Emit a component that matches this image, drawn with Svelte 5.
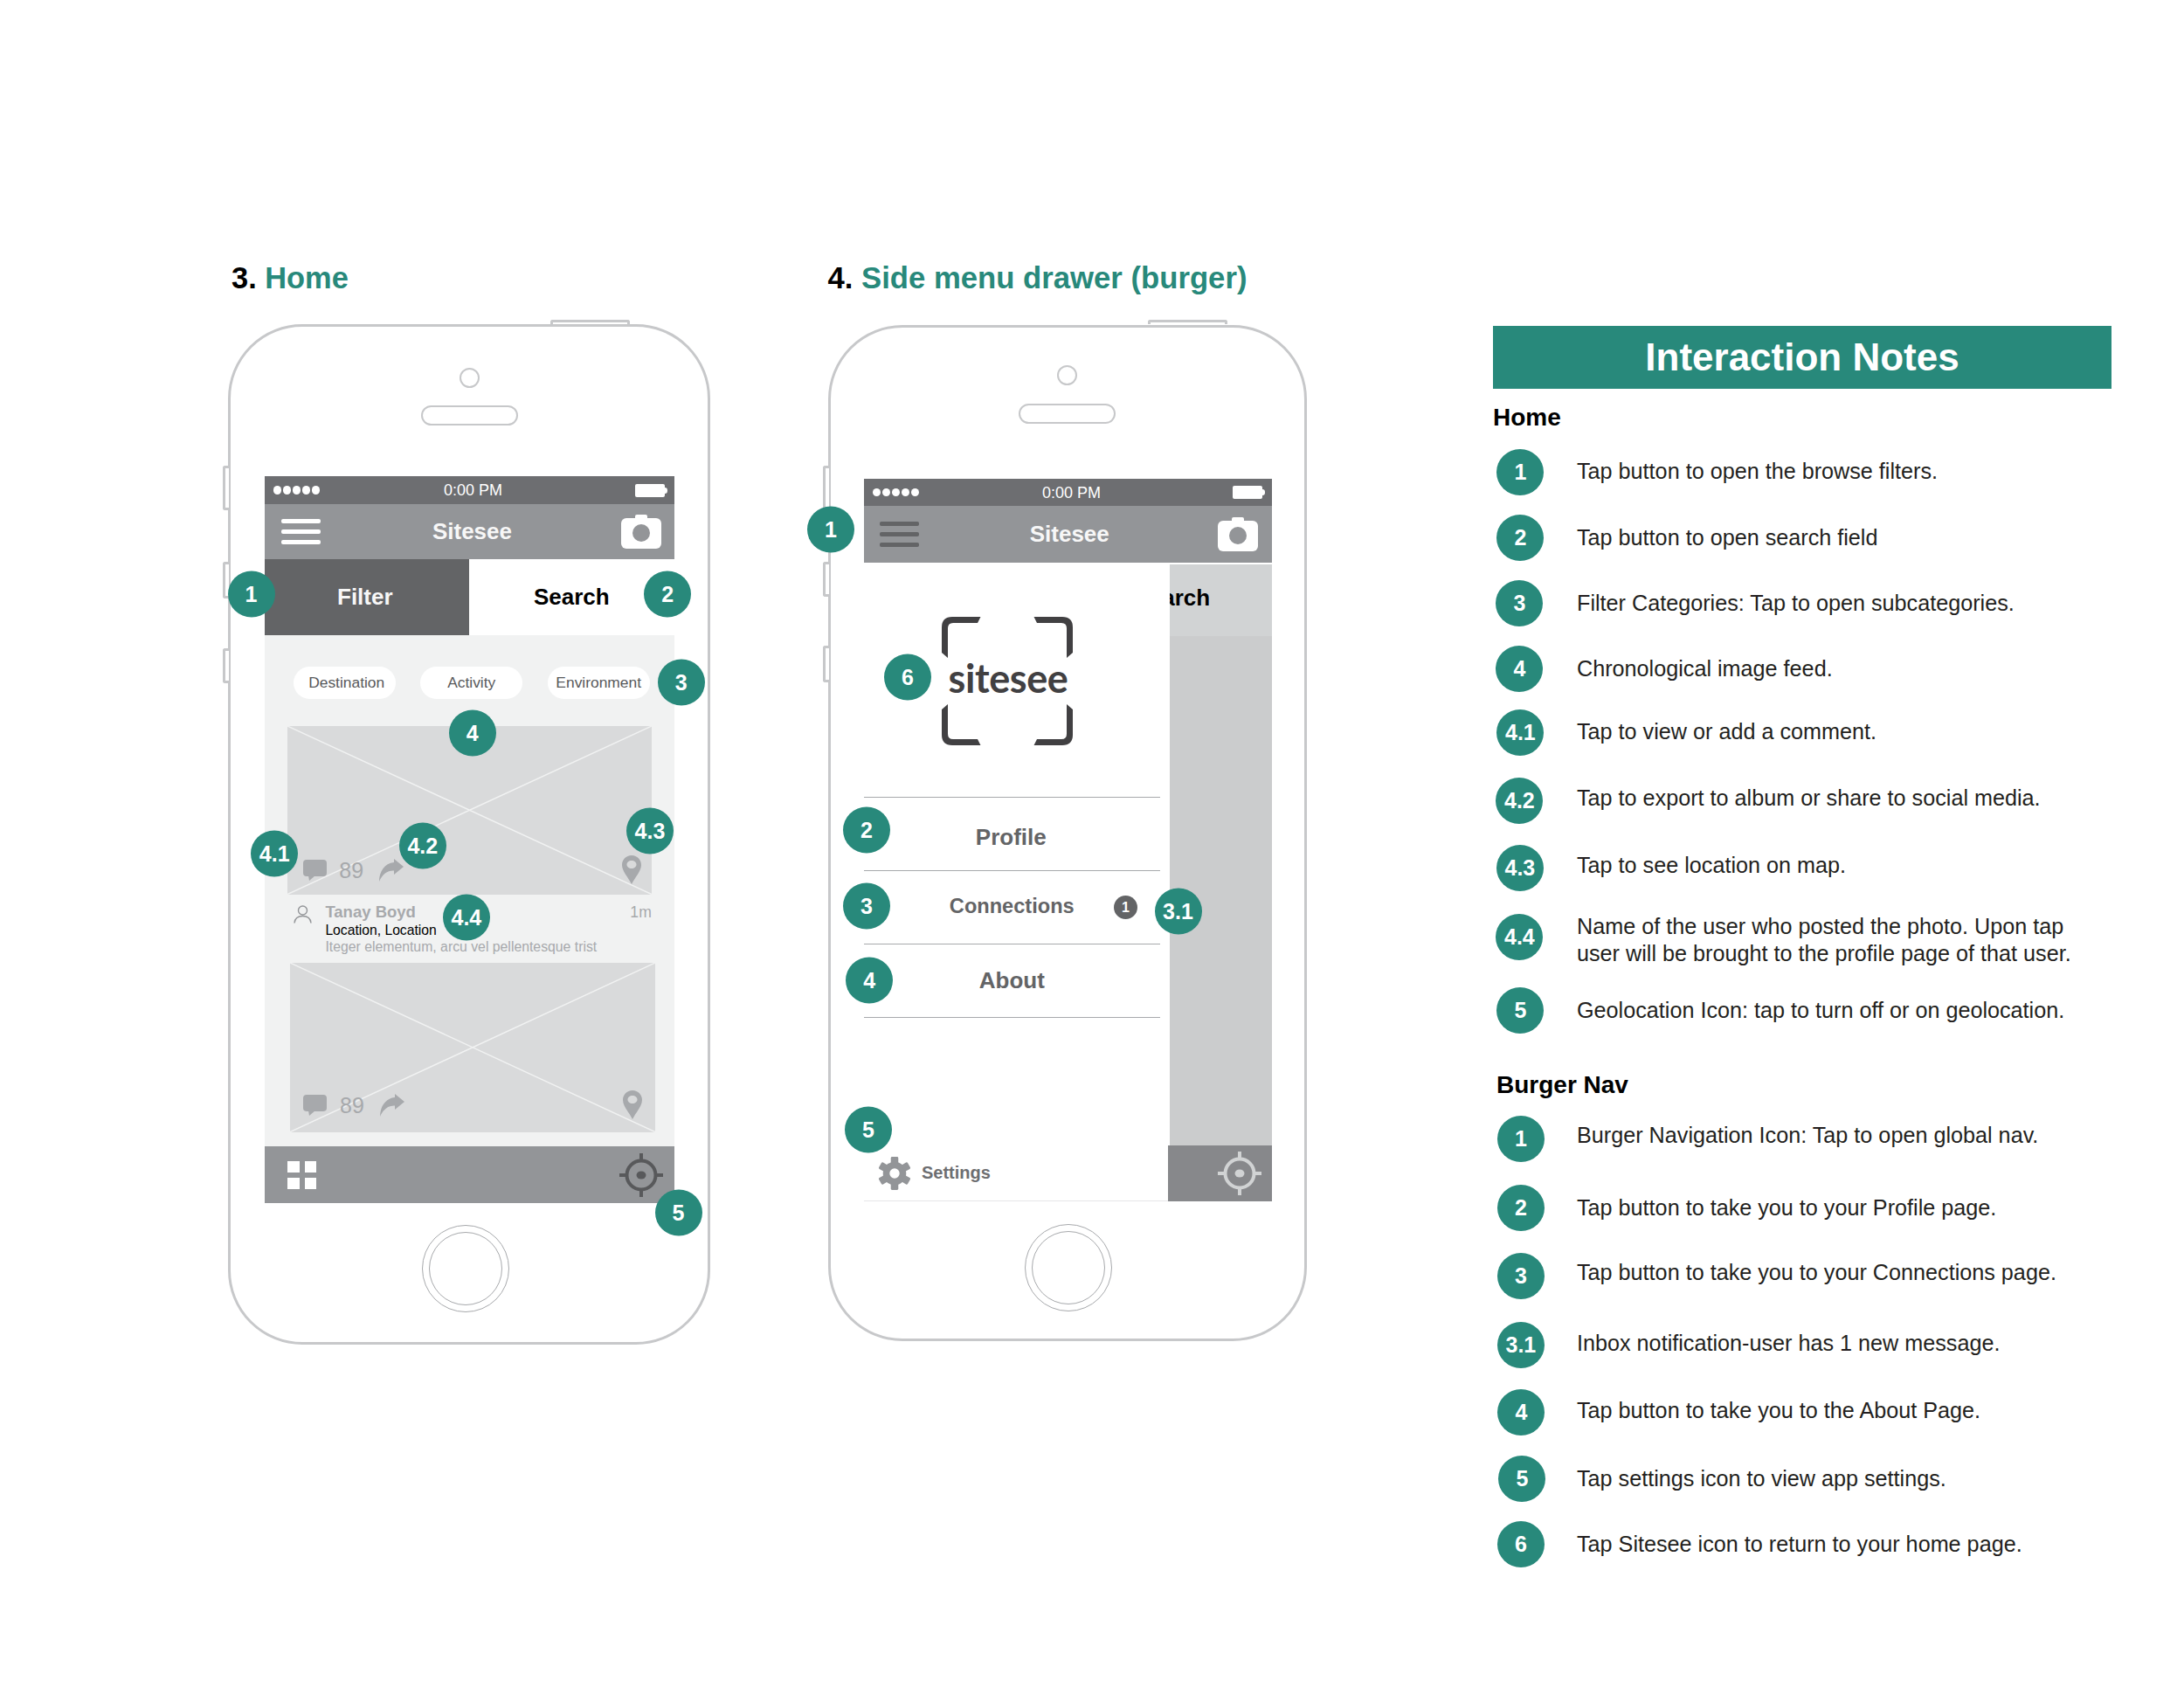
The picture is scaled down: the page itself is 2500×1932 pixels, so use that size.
<script>
    // y = centre of the circle on the page, dy = text offset against it, x = circle inset
    const homeNotes = [
        { n: '1', text: 'Tap button to open the browse filters.', y: 540, dy: -1.5, x: 4.4 },
        { n: '2', text: 'Tap button to open search field', y: 615, dy: 0, x: 4.4 },
        { n: '3', text: 'Filter Categories: Tap to open subcategories.', y: 690, dy: 0, x: 3.4 },
        { n: '4', text: 'Chronological image feed.', y: 765, dy: 0, x: 3.4 },
        { n: '4.1', text: 'Tap to view or add a comment.', y: 838, dy: -1.5, x: 4.4 },
        { n: '4.2', text: 'Tap to export to album or share to social media.', y: 916, dy: -3.5, x: 3.4 },
        { n: '4.3', text: 'Tap to see location on map.', y: 993, dy: -3, x: 3.9 },
        { n: '4.4', text: 'Name of the user who posted the photo. Upon tap\nuser will be brought to the profile page of that user.', y: 1072, dy: 3.4, x: 3.4 },
        { n: '5', text: 'Geolocation Icon: tap to turn off or on geolocation.', y: 1156, dy: 0, x: 4.4 }
    ];
    const burgerNotes = [
        { n: '1', text: 'Burger Navigation Icon: Tap to open global nav.', y: 1302.8, dy: -3.5, x: 4.9 },
        { n: '2', text: 'Tap button to take you to your Profile page.', y: 1381.7, dy: 0, x: 4.9 },
        { n: '3', text: 'Tap button to take you to your Connections page.', y: 1460, dy: -3.7, x: 4.9 },
        { n: '3.1', text: 'Inbox notification-user has 1 new message.', y: 1539, dy: -2.3, x: 4.9 },
        { n: '4', text: 'Tap button to take you to the About Page.', y: 1615.7, dy: -1.7, x: 5.4 },
        { n: '5', text: 'Tap settings icon to view app settings.', y: 1692.3, dy: -0.6, x: 6.4 },
        { n: '6', text: 'Tap Sitesee icon to return to your home page.', y: 1766.7, dy: 0, x: 4.9 }
    ];

    function withGaps(rows) {
        return rows.map((row, i) => ({ ...row, gap: i ? row.y - rows[i - 1].y - 54 : 0 }));
    }

    const homeBadges = [
        { n: '1', x: 23.5, y: 306.5 },
        { n: '2', x: 500.3, y: 306.5 },
        { n: '3', x: 515.6, y: 407.5 },
        { n: '4', x: 276.8, y: 465.5 },
        { n: '4.1', x: 50.2, y: 603.3 },
        { n: '4.2', x: 219.8, y: 594 },
        { n: '4.3', x: 480, y: 577 },
        { n: '4.4', x: 269.9, y: 676.5 },
        { n: '5', x: 512.5, y: 1014.5 }
    ];
    const drawerBadges = [
        { n: '1', x: 0.5, y: 231.5 },
        { n: '6', x: 88.5, y: 400 },
        { n: '2', x: 41.5, y: 575.5 },
        { n: '3', x: 41.5, y: 662 },
        { n: '4', x: 44.7, y: 747 },
        { n: '5', x: 43.4, y: 918.5 },
        { n: '3.1', x: 398, y: 668.5 }
    ];
</script>

{#snippet topBars(dark)}
    <div class="status">
        <div class="dots"><i></i><i></i><i></i><i></i><i></i></div>
        <span class="time">0:00 PM</span>
        <div class="battery"></div>
    </div>
    <div class="navbar" class:dark>
        <div class="burger"><i></i><i></i><i></i></div>
        <span class="app-name">Sitesee</span>
        <svg class="camera" viewBox="0 0 46 39">
            <rect x="16" y="0" width="14" height="9" rx="2" fill="#fff" />
            <rect x="0" y="4" width="46" height="35" rx="6" fill="#fff" />
            <circle cx="23" cy="21" r="10" fill="#939598" />
        </svg>
    </div>
{/snippet}

{#snippet target(color)}
    <svg class="target" viewBox="0 0 50 50" fill="none" stroke={color} stroke-width="4">
        <circle cx="25" cy="25" r="16.5" />
        <path d="M25 0v10M25 40v10M0 25h10M40 25h10" />
        <ellipse cx="25" cy="25" rx="5.5" ry="4.5" fill={color} stroke="none" />
    </svg>
{/snippet}

{#snippet photo(cls)}
    <div class="photo {cls}">
        <svg class="cross" viewBox="0 0 100 100" preserveAspectRatio="none">
            <path d="M0 0L100 100M100 0L0 100" stroke="#f1f2f2" stroke-width="1.5" vector-effect="non-scaling-stroke" />
        </svg>
        <div class="actions">
            <svg class="comment" viewBox="0 0 27 24">
                <rect width="27" height="19" rx="4" fill="#a7a9ac" />
                <path d="M6 18l1 6 7-6z" fill="#a7a9ac" />
            </svg>
            <span class="count">89</span>
            <svg class="share" viewBox="0 0 28 26">
                <path d="M17 0L28 9 17 18V13.500C10 13 4 17 0 26 0 15 6 5 17 4Z" fill="#a7a9ac" />
            </svg>
        </div>
        <svg class="pin" viewBox="0 0 22 33">
            <path fill-rule="evenodd" d="M11 0C4.500 0 0 5 0 11c0 7 7 14 11 22 4-8 11-15 11-22C22 5 17.500 0 11 0zM11 6c3 0 5.500 1.800 5.500 4.500S14 15 11 15s-5.500-1.800-5.500-4.500S8 6 11 6z" fill="#a7a9ac" />
        </svg>
    </div>
{/snippet}

{#snippet notesRow(row)}
    <li class="note" style="margin-top: {row.gap}px">
        <span class="note-badge" style="margin-left: {row.x}px">{row.n}</span>
        <span class="note-text" style="margin-top: {row.dy * 2}px">{row.text}</span>
    </li>
{/snippet}

<main class="page">
    <section class="col col-home">
        <h2 class="title"><b>3.</b> <span>Home</span></h2>
        <div class="phone home">
            <span class="side s1"></span>
            <span class="side s2"></span>
            <span class="side s3"></span>
            <span class="power"></span>
            <div class="lens"></div>
            <div class="speaker"></div>
            <div class="screen">
                {@render topBars(false)}
                <div class="tabs">
                    <div class="tab filter">Filter</div>
                    <div class="tab search">Search</div>
                </div>
                <div class="feed">
                    <div class="pills">
                        <span class="pill-dest">Destination</span>
                        <span>Activity</span>
                        <span>Environment</span>
                    </div>
                    {@render photo('first')}
                    <div class="meta">
                        <svg class="person" viewBox="0 0 21 21" fill="none" stroke="#939598" stroke-width="1.400">
                            <circle cx="10.500" cy="6" r="5" />
                            <path d="M1 20.500c.5-5 3.500-8 9.500-8s9 3 9.500 8" />
                        </svg>
                        <div class="meta-text">
                            <div class="name">Tanay Boyd</div>
                            <div class="place">Location, Location</div>
                            <div class="desc">Iteger elementum, arcu vel pellentesque trist</div>
                        </div>
                        <span class="age">1m</span>
                    </div>
                    {@render photo('second')}
                </div>
                <div class="bottom-bar">
                    <div class="grid-icon"><i></i><i></i><i></i><i></i></div>
                    {@render target('#58595b')}
                </div>
            </div>
            <div class="home-btn"><div></div></div>
            {#each homeBadges as b}
                <span class="badge" style="left: {b.x}px; top: {b.y}px">{b.n}</span>
            {/each}
        </div>
    </section>

    <section class="col col-drawer">
        <h2 class="title"><b>4.</b> <span>Side menu drawer (burger)</span></h2>
        <div class="phone side-menu">
            <span class="side s1"></span>
            <span class="side s2"></span>
            <span class="side s3"></span>
            <span class="power"></span>
            <div class="lens"></div>
            <div class="speaker"></div>
            <div class="screen">
                {@render topBars(true)}
                <div class="drawer-body">
                    <div class="rear-tabs"><span>Search</span></div>
                    <div class="rear-feed"></div>
                    <div class="rear-bar">{@render target('#d1d3d4')}</div>
                    <aside class="drawer">
                        <div class="logo">
                            <svg class="brackets" viewBox="0 0 150 147" fill="#414042">
                                <path d="M0 12Q0 0 12 0H44.500L41 7H13Q7 7 7 13V47L0 41Z" />
                                <path d="M0 12Q0 0 12 0H44.500L41 7H13Q7 7 7 13V47L0 41Z" transform="translate(150 0) scale(-1 1)" />
                                <path d="M0 12Q0 0 12 0H44.500L41 7H13Q7 7 7 13V47L0 41Z" transform="translate(0 147) scale(1 -1)" />
                                <path d="M0 12Q0 0 12 0H44.500L41 7H13Q7 7 7 13V47L0 41Z" transform="translate(150 147) scale(-1 -1)" />
                            </svg>
                            <span class="wordmark">sitesee</span>
                        </div>
                        <ul class="menu">
                            <li class="profile">Profile</li>
                            <li class="connections">Connections<span class="count-dot">1</span></li>
                            <li>About</li>
                        </ul>
                        <div class="settings">
                            <svg class="gear" viewBox="-20 -20 40 40" fill="#939598">
                                <circle r="10" fill="none" stroke="#939598" stroke-width="8" />
                                {#each [0, 60, 120, 180, 240, 300] as a}
                                    <rect x="-4.500" y="-20" width="9" height="8" rx="1.500" transform="rotate({a})" />
                                {/each}
                            </svg>
                            <span>Settings</span>
                        </div>
                    </aside>
                </div>
            </div>
            <div class="home-btn"><div></div></div>
            {#each drawerBadges as b}
                <span class="badge" style="left: {b.x}px; top: {b.y}px">{b.n}</span>
            {/each}
        </div>
    </section>

    <section class="col col-notes">
        <h1 class="notes-head">Interaction Notes</h1>
        <h3 class="notes-sub">Home</h3>
        <ul class="notes">
            {#each withGaps(homeNotes) as row}
                {@render notesRow(row)}
            {/each}
        </ul>
        <h3 class="notes-sub burger-sub">Burger Nav</h3>
        <ul class="notes">
            {#each withGaps(burgerNotes) as row}
                {@render notesRow(row)}
            {/each}
        </ul>
    </section>
</main>

<style>
    :global(body) {
        margin: 0;
        background: #fff;
    }

    .page {
        display: flex;
        width: 2500px;
        height: 1932px;
        box-sizing: border-box;
        padding-left: 261px;
        font-family: 'Liberation Sans', Arial, sans-serif;
        color: #231f20;
    }

    .col-home {
        width: 552px;
        padding-top: 298px;
    }

    .col-drawer {
        width: 548.5px;
        margin-left: 134.5px;
        padding-top: 297.5px;
    }

    .col-notes {
        width: 708px;
        margin-left: 213px;
        padding-top: 373px;
    }

    .title {
        margin: 0 0 0 4px;
        height: 40px;
        font-size: 34.4px;
        line-height: 40px;
        font-weight: 700;
        color: #000;
        white-space: nowrap;
    }

    .col-drawer .title {
        margin-left: 0;
        font-size: 34.7px;
    }

    .title span {
        color: #28897b;
    }

    .phone {
        position: relative;
        box-sizing: border-box;
        display: flex;
        flex-direction: column;
        align-items: center;
        border: 3px solid #c7c8ca;
        border-radius: 85px;
        background: #fff;
    }

    .home {
        height: 1168.5px;
        margin-top: 32.5px;
    }

    .side-menu {
        height: 1163px;
        margin-top: 34px;
    }

    .side {
        position: absolute;
        left: -9px;
        width: 7px;
        border: 3px solid #c7c8ca;
        border-right: 0;
        border-radius: 3px 0 0 3px;
        box-sizing: border-box;
        background: #fff;
    }

    .home .s1 { top: 159.5px; height: 51px; }
    .home .s2 { top: 269.5px; height: 42px; }
    .home .s3 { top: 368.5px; height: 40px; }
    .side-menu .s1 { top: 158.5px; height: 55px; }
    .side-menu .s2 { top: 268.5px; height: 40px; }
    .side-menu .s3 { top: 364.5px; height: 42px; }

    .power {
        position: absolute;
        top: -7.5px;
        left: 365.6px;
        width: 91px;
        height: 5px;
        box-sizing: border-box;
        border: 3px solid #c7c8ca;
        border-bottom: 0;
        border-radius: 3px 3px 0 0;
    }

    .side-menu .power {
        left: 363.5px;
        top: -8.5px;
    }

    .lens {
        width: 23px;
        height: 23px;
        box-sizing: border-box;
        margin-top: 47px;
        border: 2px solid #c7c8ca;
        border-radius: 50%;
    }

    .speaker {
        width: 111px;
        height: 23px;
        box-sizing: border-box;
        margin-top: 20.5px;
        border: 2px solid #c7c8ca;
        border-radius: 12px;
    }

    .side-menu .lens {
        margin-top: 43px;
    }

    .side-menu .speaker {
        margin-top: 21.5px;
    }

    .screen {
        display: flex;
        flex-direction: column;
        align-self: flex-start;
        margin: 58px 0 0 39px;
    }

    .home .screen {
        width: 469px;
    }

    .side-menu .screen {
        width: 467px;
        height: 827px;
        margin: 63px 0 0 38.5px;
    }

    .status {
        display: grid;
        grid-template-columns: 1fr auto 1fr;
        align-items: center;
        height: 32px;
        flex: none;
        padding: 0 8px 0 10px;
        box-sizing: border-box;
        background: #6d6e71;
        color: #fff;
    }

    .side-menu .status {
        height: 31px;
    }

    .dots {
        display: flex;
        gap: 1.6px;
    }

    .dots i {
        width: 9.4px;
        height: 9.4px;
        border-radius: 50%;
        background: #fff;
    }

    .time {
        margin: 1px 0 0 6px;
        font-size: 18px;
    }

    .battery {
        position: relative;
        justify-self: end;
        width: 34px;
        height: 15px;
        margin-right: 3px;
        border-radius: 2px;
        background: #fff;
    }

    .battery::after {
        content: '';
        position: absolute;
        top: 4px;
        right: -3px;
        width: 3px;
        height: 7px;
        border-radius: 0 3px 3px 0;
        background: #fff;
    }

    .navbar {
        display: flex;
        align-items: center;
        justify-content: space-between;
        flex: none;
        height: 63px;
        padding: 0 14.6px 0 18.5px;
        box-sizing: border-box;
        background: #939598;
    }

    .side-menu .navbar {
        height: 64.5px;
        padding: 0 16px 0 17.5px;
    }

    .burger {
        display: flex;
        flex-direction: column;
        gap: 7px;
    }

    .burger i {
        width: 45px;
        height: 5px;
        border-radius: 2px;
        background: #fff;
    }

    .dark .burger i {
        background: #636466;
    }

    .app-name {
        margin-left: 3px;
        font-size: 26px;
        font-weight: 700;
        color: #f7f7f7;
    }

    .camera {
        width: 46px;
        height: 39px;
    }

    .tabs {
        display: flex;
        height: 87px;
    }

    .tab {
        display: flex;
        align-items: center;
        justify-content: center;
        font-size: 26px;
        font-weight: 700;
    }

    .filter {
        width: 233.6px;
        padding-right: 4px;
        box-sizing: border-box;
        background: #636466;
        color: #f7f7f7;
    }

    .search {
        flex: 1;
        background: #fff;
        color: #000;
    }

    .feed {
        height: 585.3px;
        padding-top: 36px;
        box-sizing: border-box;
        background: #f1f2f2;
    }

    .pills {
        display: flex;
        gap: 28.500px;
        margin-left: 32.7px;
    }

    .pills span {
        width: 117px;
        height: 37px;
        border-radius: 18.5px;
        background: #fff;
        text-align: center;
        font-size: 17.4px;
        line-height: 37px;
        color: #58595b;
    }

    .pills .pill-dest {
        box-sizing: border-box;
        padding-left: 5px;
    }

    .photo {
        position: relative;
        display: flex;
        align-items: flex-end;
        justify-content: space-between;
        box-sizing: border-box;
        background: #d9dadb;
    }

    .photo.first {
        width: 417px;
        height: 192.6px;
        margin: 31.2px 0 0 25.8px;
        padding: 0 12.3px 11.5px 18px;
    }

    .photo.second {
        width: 418px;
        height: 193.6px;
        margin-left: 28.8px;
        padding: 0 15.3px 14.5px 15.7px;
    }

    .cross {
        position: absolute;
        inset: 0;
        width: 100%;
        height: 100%;
    }

    .actions {
        position: relative;
        display: flex;
        align-items: center;
        margin-bottom: 3.3px;
    }

    .comment {
        width: 27px;
        height: 24px;
    }

    .count {
        width: 27.5px;
        margin: 0 18.4px 0 14.5px;
        font-size: 25px;
        line-height: 26px;
        color: #a7a9ac;
    }

    .share {
        width: 28px;
        height: 26px;
    }

    .pin {
        position: relative;
        width: 22px;
        height: 33px;
    }

    .meta {
        display: flex;
        align-items: flex-start;
        width: 417px;
        height: 78.6px;
        margin-left: 25.8px;
        padding-top: 10px;
        box-sizing: border-box;
    }

    .person {
        width: 21px;
        height: 21px;
        margin: 2.400px 15px 0 7.6px;
        flex: none;
    }

    .meta-text {
        flex: 1;
    }

    .name {
        font-size: 18.5px;
        line-height: 20px;
        font-weight: 700;
        color: #a7a9ac;
    }

    .place {
        margin-top: 1.300px;
        font-size: 15.7px;
        line-height: 19px;
        color: #000;
    }

    .desc {
        font-size: 15.8px;
        line-height: 19px;
        color: #a7a9ac;
    }

    .age {
        font-size: 17.6px;
        line-height: 20px;
        color: #a7a9ac;
    }

    .bottom-bar {
        display: flex;
        align-items: center;
        justify-content: space-between;
        height: 65px;
        padding: 0 13.3px 0 26px;
        box-sizing: border-box;
        background: #939598;
    }

    .grid-icon {
        display: grid;
        grid-template-columns: 13.500px 13.500px;
        grid-auto-rows: 13.200px;
        column-gap: 6.3px;
        row-gap: 6px;
    }

    .grid-icon i {
        background: #fff;
    }

    .target {
        width: 50px;
        height: 50px;
    }

    .home-btn {
        display: flex;
        align-items: center;
        justify-content: center;
        width: 100px;
        height: 100px;
        margin: 24.6px 8px 0 0;
        box-sizing: border-box;
        border: 1.5px solid #a7a9ac;
        border-radius: 50%;
    }

    .home-btn div {
        width: 84px;
        height: 84px;
        box-sizing: border-box;
        border: 1.5px solid #a7a9ac;
        border-radius: 50%;
    }

    .side-menu .home-btn {
        margin: 25.5px 0 0 2px;
    }

    .badge {
        position: absolute;
        z-index: 5;
        display: flex;
        align-items: center;
        justify-content: center;
        width: 54px;
        height: 53px;
        transform: translate(-50%, -50%);
        border-radius: 50%;
        background: #28897b;
        color: #fff;
        font-size: 25px;
        font-weight: 700;
    }

    .drawer-body {
        position: relative;
        display: flex;
        flex-direction: column;
        flex: 1;
    }

    .rear-tabs {
        display: flex;
        align-items: center;
        justify-content: flex-end;
        height: 82.5px;
        margin-top: 2px;
        padding-right: 70.8px;
        background: #d1d3d4;
        font-size: 26px;
        font-weight: 700;
        color: #000;
    }

    .rear-tabs span {
        margin-bottom: 4px;
    }

    .rear-feed {
        flex: 1;
        background: #cbcccd;
    }

    .rear-bar {
        position: relative;
        z-index: 2;
        display: flex;
        align-items: center;
        justify-content: flex-end;
        align-self: flex-end;
        width: 118.8px;
        height: 64px;
        padding-right: 12.1px;
        box-sizing: border-box;
        background: #87888b;
    }

    .drawer {
        position: absolute;
        top: 0;
        left: 0;
        bottom: 0;
        z-index: 1;
        display: flex;
        flex-direction: column;
        width: 349.7px;
        background: #fff;
    }

    .logo {
        display: grid;
        align-items: center;
        justify-items: center;
        width: 150px;
        height: 147px;
        margin: 62.5px 0 0 89px;
        flex: none;
    }

    .brackets,
    .wordmark {
        grid-area: 1 / 1;
    }

    .brackets {
        width: 150px;
        height: 147px;
    }

    .wordmark {
        margin: 0 0 7px 2px;
        font-family: Lato, 'Liberation Sans', sans-serif;
        font-size: 45px;
        font-weight: 700;
        line-height: 1;
        letter-spacing: -0.4px;
        color: #414042;
    }

    .menu {
        width: 338.6px;
        margin: 59.4px 0 0;
        padding: 0;
        list-style: none;
        border-top: 1.5px solid #a7a9ac;
    }

    .menu li {
        position: relative;
        display: flex;
        align-items: center;
        justify-content: center;
        height: 84px;
        box-sizing: border-box;
        border-bottom: 1.5px solid #a7a9ac;
        font-size: 26px;
        font-weight: 700;
        color: #636466;
    }

    .menu .profile {
        padding: 7px 2px 0 0;
    }

    .menu .connections {
        padding-bottom: 2px;
        font-size: 23.6px;
    }

    .count-dot {
        position: absolute;
        right: 25.6px;
        top: 28px;
        width: 27px;
        height: 27px;
        border-radius: 50%;
        background: #636466;
        color: #fff;
        text-align: center;
        font-size: 16px;
        line-height: 27px;
    }

    .settings {
        display: flex;
        align-items: center;
        gap: 12px;
        height: 64px;
        margin-top: auto;
        padding-left: 16px;
        box-sizing: border-box;
        border-bottom: 1.5px solid #e6e7e8;
        font-size: 20px;
        font-weight: 700;
        color: #6d6e71;
    }

    .gear {
        width: 38px;
        height: 38px;
    }

    .notes-head {
        height: 72px;
        margin: 0;
        background: #28897b;
        color: #fff;
        text-align: center;
        font-size: 44px;
        font-weight: 700;
        line-height: 72px;
    }

    .notes-sub {
        margin: 16px 0 18.5px;
        font-size: 28px;
        font-weight: 700;
        line-height: 34px;
        color: #000;
    }

    .burger-sub {
        margin: 41.7px 0 17px 4px;
    }

    .notes {
        margin: 0;
        padding: 0;
        list-style: none;
    }

    .note {
        position: relative;
        display: flex;
        align-items: center;
        height: 54px;
    }

    .note-badge {
        display: flex;
        flex: none;
        align-items: center;
        justify-content: center;
        width: 54px;
        height: 53px;
        border-radius: 50%;
        background: #28897b;
        color: #fff;
        font-size: 25px;
        font-weight: 700;
    }

    .note-text {
        position: absolute;
        left: 96px;
        font-size: 25.2px;
        line-height: 30.7px;
        white-space: pre-line;
        color: #231f20;
    }
</style>
